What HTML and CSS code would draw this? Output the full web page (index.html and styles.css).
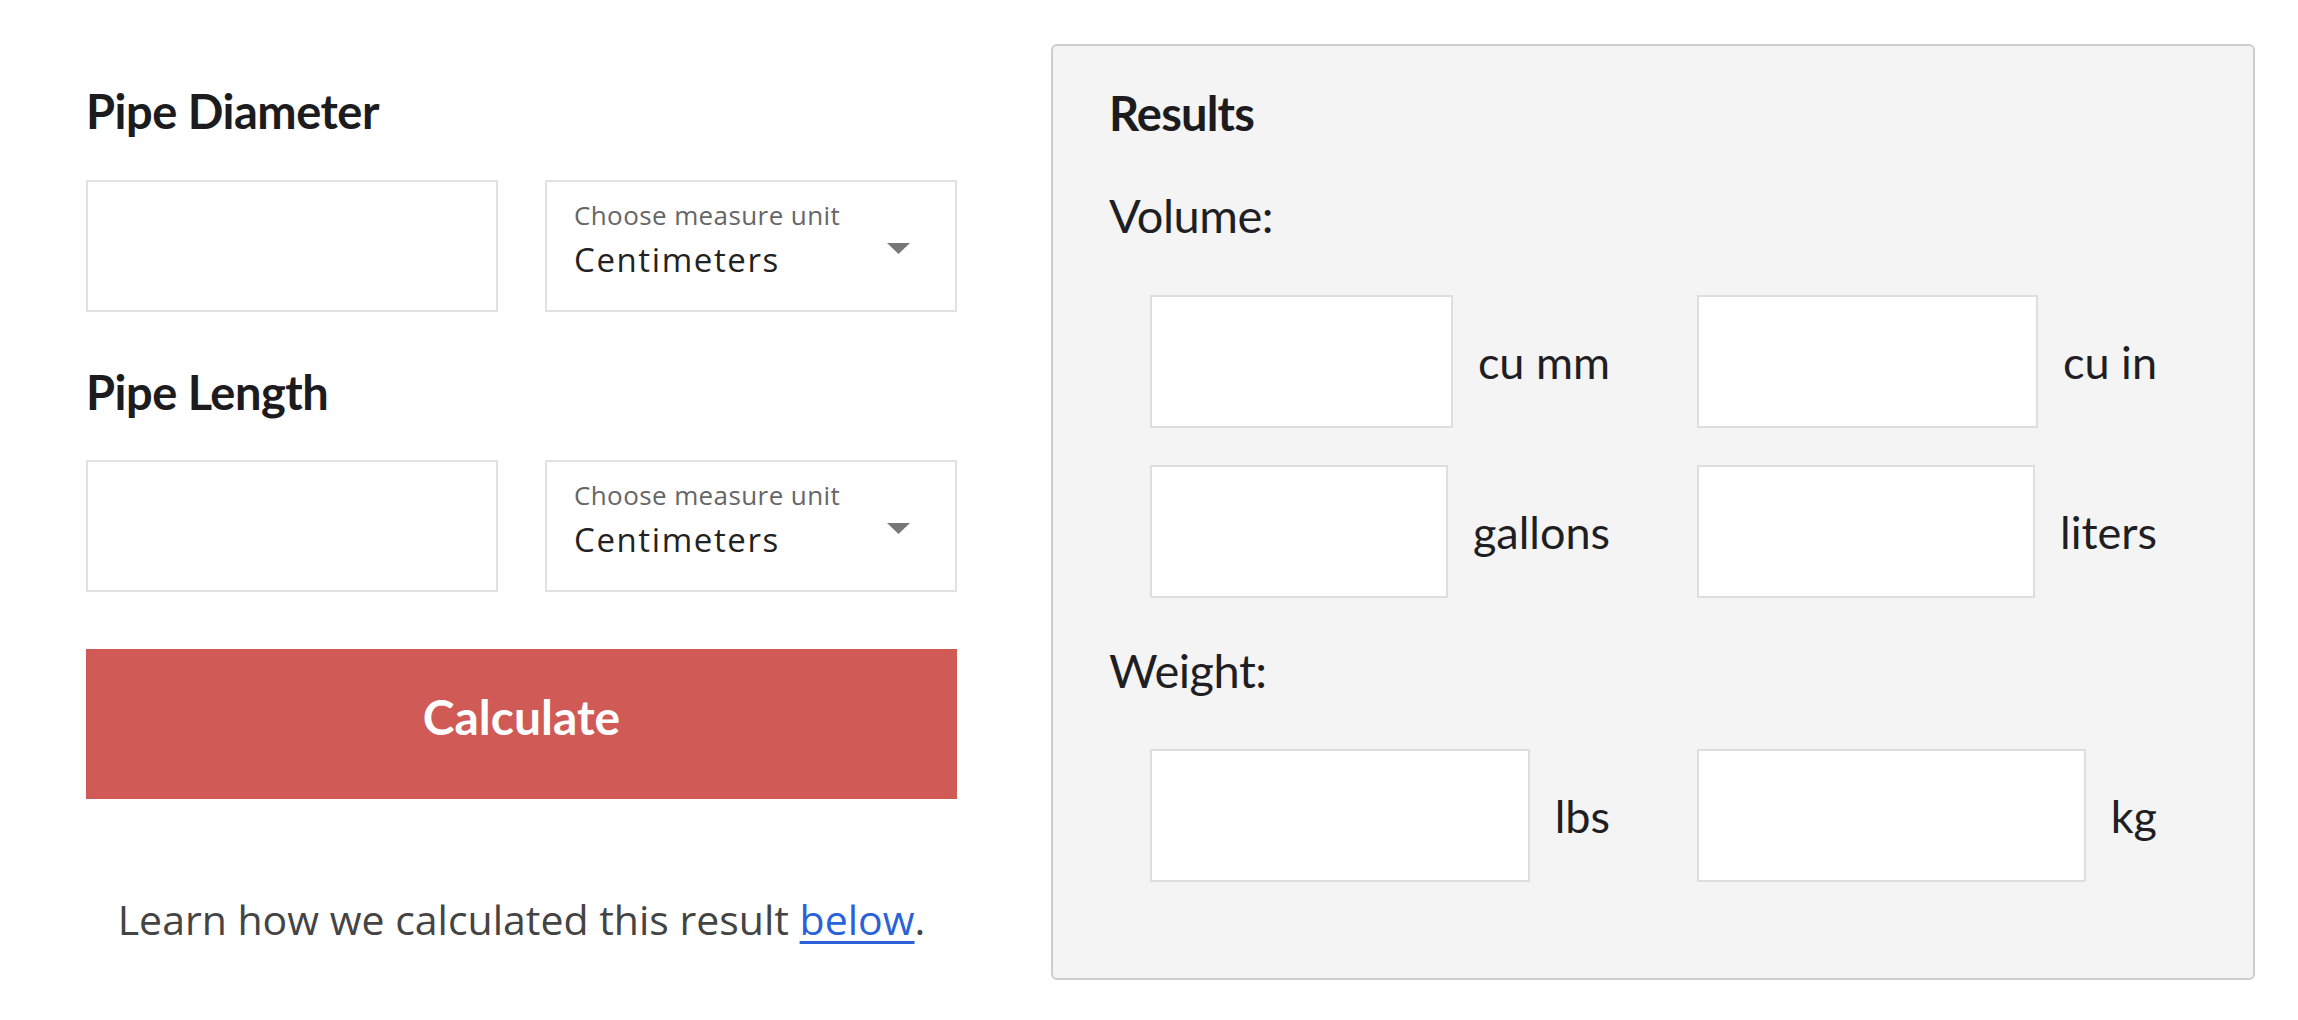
FILE: index.html
```html
<!DOCTYPE html>
<html lang="en">
<head>
<meta charset="utf-8">
<title>Pipe Volume Calculator</title>
<link rel="stylesheet" href="styles.css">
</head>
<body>
<main class="page">
  <section class="calc">
    <h2 class="field-title">Pipe Diameter</h2>
    <div class="field-row">
      <div class="text-box"></div>
      <div class="select-box">
        <div class="select-text">
          <div class="select-label">Choose measure unit</div>
          <div class="select-value">Centimeters</div>
        </div>
        <svg class="select-arrow" width="23" height="11" viewBox="0 0 23 11"><path d="M0 0 H23 L11.5 11 Z" fill="#777"/></svg>
      </div>
    </div>
    <h2 class="field-title second">Pipe Length</h2>
    <div class="field-row second-row">
      <div class="text-box"></div>
      <div class="select-box">
        <div class="select-text">
          <div class="select-label">Choose measure unit</div>
          <div class="select-value">Centimeters</div>
        </div>
        <svg class="select-arrow" width="23" height="11" viewBox="0 0 23 11"><path d="M0 0 H23 L11.5 11 Z" fill="#777"/></svg>
      </div>
    </div>
    <button class="calc-btn" type="button">Calculate</button>
    <p class="note">Learn how we calculated this result <a href="#how">below</a>.</p>
  </section>

  <aside class="results">
    <h2 class="results-title">Results</h2>
    <h3 class="group-title">Volume:</h3>
    <div class="out-grid">
      <div class="out-cell"><div class="out-box"></div><span class="out-unit">cu mm</span></div>
      <div class="out-cell"><div class="out-box"></div><span class="out-unit">cu in</span></div>
      <div class="out-cell"><div class="out-box"></div><span class="out-unit">gallons</span></div>
      <div class="out-cell"><div class="out-box"></div><span class="out-unit">liters</span></div>
    </div>
    <h3 class="group-title weight">Weight:</h3>
    <div class="out-grid weight-grid">
      <div class="out-cell"><div class="out-box"></div><span class="out-unit">lbs</span></div>
      <div class="out-cell"><div class="out-box"></div><span class="out-unit">kg</span></div>
    </div>
  </aside>
</main>
</body>
</html>
```

FILE: styles.css
```css
* { box-sizing: border-box; }

html, body {
  margin: 0;
  padding: 0;
  background: #ffffff;
}

body {
  font-family: "Lato", "Liberation Sans", sans-serif;
  color: #1c1c1f;
}

.page {
  display: flex;
  align-items: flex-start;
  gap: 94px;
  padding: 44px 0 0 86px;
}

/* ---------- left column ---------- */
.calc {
  width: 871px;
  flex: none;
  padding-top: 39px;
}

.field-title {
  margin: 0;
  font-family: "Lato", sans-serif;
  font-weight: 700;
  font-size: 47px;
  line-height: 56px;
  color: #1c1c1f;
  letter-spacing: -0.5px;
}

.field-title.second { margin-top: 52px; }

.field-row {
  display: grid;
  grid-template-columns: repeat(2, minmax(0, 1fr));
  column-gap: 47px;
  margin-top: 41px;
  height: 132px;
}

.field-row.second-row { margin-top: 40px; }

.text-box,
.select-box {
  background: #fff;
  border: 2px solid #e1e1e1;
}

.select-box {
  display: flex;
  align-items: flex-start;
  padding: 18px 45px 0 27px;
}

.select-text { flex: 1; }

.select-label {
  font-family: "Open Sans", sans-serif;
  font-size: 26px;
  line-height: 30px;
  color: #666;
  letter-spacing: 0.4px;
}

.select-value {
  margin-top: 10px;
  font-family: "Open Sans", sans-serif;
  font-size: 33px;
  line-height: 40px;
  color: #222;
  letter-spacing: 1.6px;
}

.select-arrow {
  flex: none;
  margin-top: 43px;
}

.calc-btn {
  display: flex;
  align-items: center;
  justify-content: center;
  width: 100%;
  height: 150px;
  margin-top: 57px;
  padding: 0 0 14px;
  border: none;
  background: #d05a56;
  color: #fff;
  font-family: "Lato", sans-serif;
  font-weight: 700;
  font-size: 48px;
  line-height: 56px;
  cursor: pointer;
}

.note {
  margin: 92px 0 0;
  text-align: center;
  font-family: "Open Sans", sans-serif;
  font-size: 41px;
  line-height: 57px;
  color: #444;
}

.note a {
  color: #2a62d9;
  text-decoration: underline;
  text-decoration-thickness: 3px;
  text-underline-offset: 6px;
}

/* ---------- results panel ---------- */
.results {
  width: 1204px;
  flex: none;
  background: #f4f4f4;
  border: 2px solid #cdcdcd;
  border-radius: 6px;
  padding: 39px 56px 96px 56px;
}

.results-title {
  margin: 0;
  font-family: "Lato", sans-serif;
  font-weight: 700;
  font-size: 47px;
  line-height: 56px;
  color: #1c1c1f;
  letter-spacing: -0.8px;
}

.group-title {
  margin: 46px 0 0;
  font-family: "Lato", sans-serif;
  font-weight: 400;
  font-size: 47px;
  line-height: 56px;
  color: #1f1f23;
  letter-spacing: -0.5px;
}

.group-title.weight { margin-top: 44px; }

.out-grid {
  display: grid;
  grid-template-columns: 460px 460px;
  column-gap: 87px;
  row-gap: 37px;
  margin: 52px 0 0 41px;
}

.out-grid.weight-grid { margin-top: 51px; }

.out-cell {
  display: flex;
  align-items: center;
  height: 133px;
}

.out-box {
  flex: 1;
  height: 100%;
  background: #fff;
  border: 2px solid #dedede;
}

.out-unit {
  margin-left: 25px;
  font-family: "Lato", sans-serif;
  font-size: 45px;
  line-height: 54px;
  color: #1f1f23;
}
```
